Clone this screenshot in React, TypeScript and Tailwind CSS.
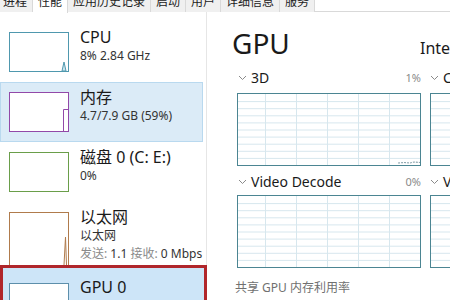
import React from "react";

const tabs = ["进程", "性能", "应用历史记录", "启动", "用户", "详细信息", "服务"];

function Thumb({ color, h = 40, children }: { color: string; h?: number; children?: React.ReactNode }) {
    return (
        <div className="w-[60px] shrink-0 border bg-white" style={{ borderColor: color, height: h }}>
            <svg width="58" height={h - 2} className="block">
                {children}
            </svg>
        </div>
    );
}

function Graph({ spark }: { spark?: boolean }) {
    const rows = [1, 2, 3, 4, 5, 6, 7, 8, 9];
    const cols = [27, 58, 89, 120, 151];
    return (
        <div className="w-[184px] h-[73px] shrink-0 border border-[#4b8592] bg-white">
            <svg width="182" height="71" className="block">
                {rows.map((r) => (
                    <line key={r} x1="0" x2="182" y1={r * 7.1 + 0.5} y2={r * 7.1 + 0.5} stroke="#d7e7ee" strokeWidth="1" />
                ))}
                {cols.map((c) => (
                    <line key={c} x1={c + 0.5} x2={c + 0.5} y1="0" y2="71" stroke="#d7e7ee" strokeWidth="1" />
                ))}
                {spark && (
                    <polyline points="160,69 166,68.5 172,69 176,68 182,68.5" fill="none" stroke="#8fa7b0" strokeWidth="1.2" strokeDasharray="2 1" />
                )}
            </svg>
        </div>
    );
}

function Chevron() {
    return (
        <svg width="9" height="6" viewBox="0 0 9 6" className="shrink-0">
            <polyline points="1,1 4.5,4.5 8,1" fill="none" stroke="#8a8a8a" strokeWidth="1" />
        </svg>
    );
}

function Label({ name, pct }: { name: string; pct: string }) {
    return (
        <div className="w-[184px] shrink-0 flex items-center">
            <span className="ml-[1px]"><Chevron /></span>
            <span className="ml-[4px] text-[14px] leading-[18px] text-[#1a1a1a]">{name}</span>
            <span className="ml-auto text-[11px] leading-[18px] text-[#8a8a8a]">{pct}</span>
        </div>
    );
}

export default function App() {
    return (
        <div className="w-[450px] h-[300px] overflow-hidden bg-white font-['Noto_Sans','Noto_Sans_CJK_SC',sans-serif] text-[#1a1a1a]">
            <div className="-mt-[10px] h-[22px] flex border-b border-[#d9d9d9] bg-white">
                {tabs.map((t, i) => (
                    <div
                        key={t}
                        className={`h-[22px] px-[5px] border-r border-[#d9d9d9] text-[12px] leading-[24px] whitespace-nowrap text-[#222] ${i === 0 ? "-ml-[2px]" : ""} ${i === 1 ? "bg-white h-[23px] relative z-10" : "bg-[#f0f0f0]"}`}
                    >
                        {t}
                    </div>
                ))}
            </div>

            <div className="flex">
                <div className="w-[207px] shrink-0 border-r border-[#e6e6e6] pt-[10px] h-[288px]">
                    <div className="w-[203px] h-[60px] flex pt-[10px] px-[9px]">
                        <Thumb color="#4f98ae">
                            <polygon points="52,38 54,29 56,38" fill="#cfe7ef" stroke="#4f98ae" strokeWidth="1" />
                        </Thumb>
                        <div className="ml-[11px] -mt-[5px]">
                            <div className="text-[16px] leading-[20px]">CPU</div>
                            <div className="text-[12px] leading-[18px] text-[#333]">8% 2.84 GHz</div>
                        </div>
                    </div>

                    <div className="w-[203px] h-[60px] flex pt-[9px] px-[8px] bg-[#dbebf7] border border-[#b9d9ef]">
                        <Thumb color="#9249a8">
                            <polyline points="53.5,38 53.5,16.5 58,16.5" fill="none" stroke="#9249a8" strokeWidth="1" />
                        </Thumb>
                        <div className="ml-[11px] -mt-[5px]">
                            <div className="text-[16px] leading-[20px]">内存</div>
                            <div className="text-[12px] leading-[18px] text-[#333]">4.7/7.9 GB (59%)</div>
                        </div>
                    </div>

                    <div className="w-[203px] h-[60px] flex pt-[10px] px-[9px]">
                        <Thumb color="#6a9e4a" />
                        <div className="ml-[11px] -mt-[5px]">
                            <div className="text-[16px] leading-[20px] whitespace-nowrap">磁盘 0 (C: E:)</div>
                            <div className="text-[12px] leading-[18px] text-[#333]">0%</div>
                        </div>
                    </div>

                    <div className="w-[203px] h-[63px] overflow-hidden flex pt-[10px] px-[9px]">
                        <Thumb color="#b07b4c" h={54}>
                            <polyline points="54,52 55.5,24 56.5,52" fill="none" stroke="#b07b4c" strokeWidth="1" />
                        </Thumb>
                        <div className="ml-[11px] -mt-[5px] whitespace-nowrap">
                            <div className="text-[16px] leading-[20px]">以太网</div>
                            <div className="text-[12px] leading-[18px] text-[#333]">以太网</div>
                            <div className="text-[12px] leading-[18px] text-[#8a8a8a]">
                                发送: <span className="text-[#333]">1.1</span> 接收: <span className="text-[#333]">0 Mbps</span>
                            </div>
                        </div>
                    </div>

                    <div className="w-[207px] h-[60px] flex pt-[15px] px-[6px] bg-[#cde5f8] border-[3px] border-[#b0262b]">
                        <Thumb color="#5d8fab" />
                        <div className="ml-[11px] -mt-[6px]">
                            <div className="text-[16px] leading-[20px]">GPU 0</div>
                        </div>
                    </div>
                </div>

                <div className="flex-1 pl-[30px] pt-[13px] whitespace-nowrap">
                    <div className="flex items-baseline h-[36px] -ml-[5px]">
                        <div className="w-[188px] shrink-0 text-[28px] leading-[36px]">GPU</div>
                        <div className="text-[16px] leading-[36px]">Intel(R) UHD Graphics 620</div>
                    </div>

                    <div className="mt-[8px] flex gap-[9px]">
                        <Label name="3D" pct="1%" />
                        <div className="flex items-center">
                            <Chevron />
                            <span className="ml-[4px] text-[14px] leading-[18px]">Copy</span>
                        </div>
                    </div>
                    <div className="mt-[6px] flex gap-[9px]">
                        <Graph spark />
                        <Graph />
                    </div>

                    <div className="mt-[7px] flex gap-[9px]">
                        <Label name="Video Decode" pct="0%" />
                        <div className="flex items-center">
                            <Chevron />
                            <span className="ml-[4px] text-[14px] leading-[18px]">Video Processing</span>
                        </div>
                    </div>
                    <div className="mt-[4px] flex gap-[9px]">
                        <Graph />
                        <Graph />
                    </div>

                    <div className="mt-[12px] -ml-[2px] text-[12px] leading-[16px] text-[#707070]">共享 GPU 内存利用率</div>
                    <div className="mt-[4px] w-[400px] border-t border-[#4b8592]" />
                </div>
            </div>
        </div>
    );
}
